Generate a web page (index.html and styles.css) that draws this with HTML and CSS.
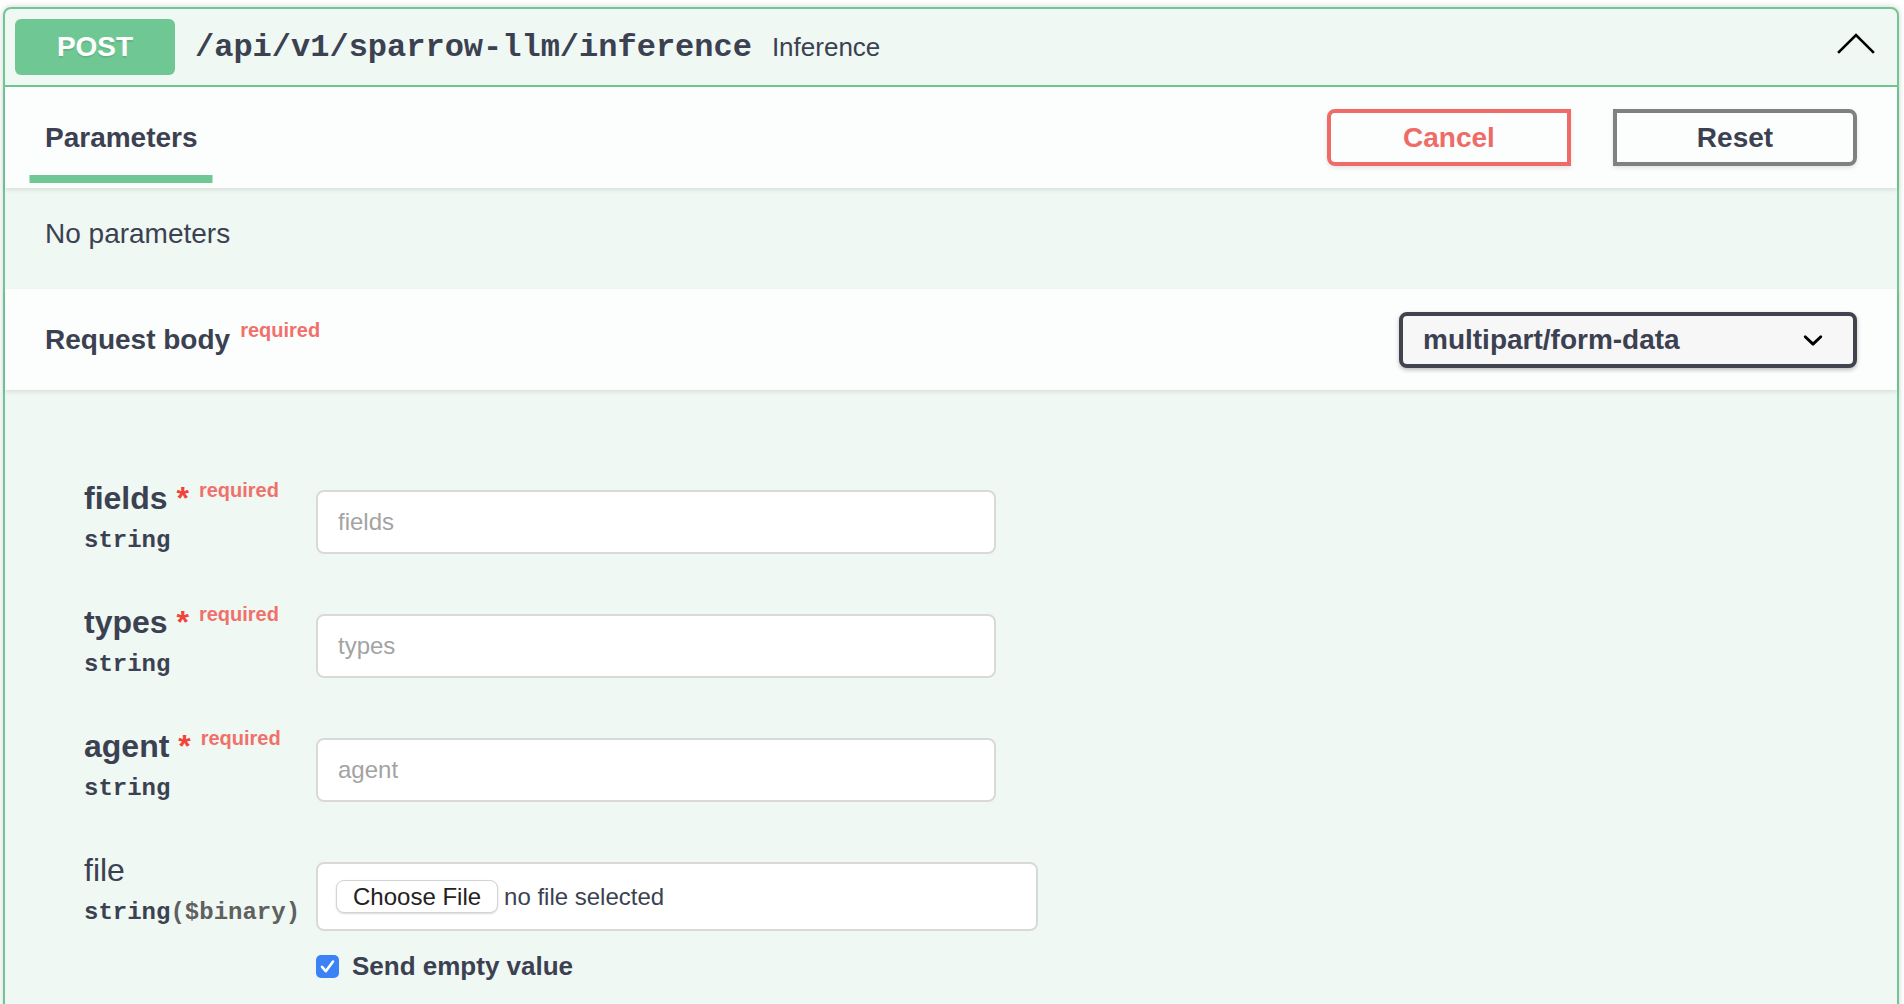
FILE: index.html
```html
<!DOCTYPE html>
<html lang="en">
<head>
<meta charset="utf-8">
<title>POST /api/v1/sparrow-llm/inference</title>
<link rel="stylesheet" href="styles.css">
</head>
<body>
<div class="page">
  <div class="opblock">
    <div class="summary">
      <span class="method">POST</span>
      <span class="path">/api/v1/sparrow-llm/inference</span>
      <span class="desc">Inference</span>
      <svg class="toggle" viewBox="0 0 40 40" aria-hidden="true"><polyline points="3,25 20,8 37,25" fill="none" stroke="#000" stroke-width="2.6" stroke-linecap="square"/></svg>
    </div>

    <div class="section-header">
      <div class="tabs">
        <h4 class="tab active"><span>Parameters</span></h4>
      </div>
      <div class="btn-group">
        <button class="btn cancel">Cancel</button>
        <button class="btn reset">Reset</button>
      </div>
    </div>

    <div class="desc-wrapper">
      <p>No parameters</p>
    </div>

    <div class="section-header">
      <h4 class="rb-title">Request body<span class="req">required</span></h4>
      <div class="select">
        <span>multipart/form-data</span>
        <svg class="select-arrow" viewBox="0 0 20 20" aria-hidden="true"><path d="M13.418 7.859a.695.695 0 01.978 0 .68.68 0 010 .969l-3.908 3.83a.697.697 0 01-.979 0l-3.908-3.83a.68.68 0 010-.969.695.695 0 01.978 0L10 11z" fill="#000"/></svg>
      </div>
    </div>

    <div class="body">
      <div class="params">
        <div class="cell-name">
          <div class="pname required">fields<span class="star">&nbsp;*</span><span class="req">required</span></div>
          <div class="ptype">string</div>
        </div>
        <div class="cell-input">
          <input class="text-input" type="text" placeholder="fields">
        </div>

        <div class="cell-name">
          <div class="pname required">types<span class="star">&nbsp;*</span><span class="req">required</span></div>
          <div class="ptype">string</div>
        </div>
        <div class="cell-input">
          <input class="text-input" type="text" placeholder="types">
        </div>

        <div class="cell-name">
          <div class="pname required">agent<span class="star">&nbsp;*</span><span class="req">required</span></div>
          <div class="ptype">string</div>
        </div>
        <div class="cell-input">
          <input class="text-input" type="text" placeholder="agent">
        </div>

        <div class="cell-name">
          <div class="pname">file</div>
          <div class="ptype">string<span class="fmt">($binary)</span></div>
        </div>
        <div class="cell-input">
          <div class="file-input">
            <span class="file-btn">Choose File</span>
            <span class="file-text">no file selected</span>
          </div>
          <label class="empty-toggle">
            <svg class="checkbox" viewBox="0 0 23 23" aria-hidden="true"><rect x="0" y="0" width="23" height="23" rx="5" fill="#3a82f6"/><path d="M6 11.8 L9.8 16.2 L17 6.5" fill="none" stroke="#fff" stroke-width="2.6" stroke-linecap="round" stroke-linejoin="round"/></svg>
            Send empty value
          </label>
        </div>
      </div>
    </div>
  </div>
</div>
</body>
</html>
```

FILE: styles.css
```css
* { box-sizing: border-box; }

html, body {
  margin: 0;
  padding: 0;
  background: #ffffff;
}

body {
  font-family: "Liberation Sans", Arial, Helvetica, sans-serif;
  color: #3b4151;
}

.page {
  padding: 7px 5px 0 3px;
}

.opblock {
  border: 2px solid #6fc894;
  border-radius: 8px;
  background: #eff8f3;
  box-shadow: 0 0 6px rgba(0, 0, 0, 0.19);
}

/* summary bar */
.summary {
  display: flex;
  align-items: center;
  padding: 10px;
  border-bottom: 2px solid #6fc894;
}

.method {
  min-width: 160px;
  height: 56px;
  display: flex;
  align-items: center;
  justify-content: center;
  background: #6fc894;
  color: #ffffff;
  font-size: 28px;
  font-weight: 700;
  border-radius: 6px;
  text-shadow: 0 2px 0 rgba(0, 0, 0, 0.1);
}

.path {
  font-family: "Liberation Mono", "Courier New", monospace;
  font-size: 32px;
  font-weight: 700;
  padding: 0 20px;
  color: #3b4151;
}

.desc {
  flex: 1;
  font-size: 26px;
  color: #3b4151;
}

.toggle {
  width: 40px;
  height: 40px;
  margin-right: 11px;
  flex: none;
}

/* section headers */
.section-header {
  display: flex;
  align-items: center;
  min-height: 101px;
  padding: 16px 40px;
  background: #fcfefd;
  box-shadow: 0 2px 4px rgba(0, 0, 0, 0.1);
  position: relative;
  z-index: 1;
}

.tabs {
  flex: 1;
  display: flex;
}

.tab {
  margin: 0;
  padding: 0 80px 0 0;
  font-size: 28px;
  font-weight: 700;
  line-height: 32px;
}

.tab span {
  position: relative;
}

.tab span::after {
  content: "";
  position: absolute;
  left: 50%;
  bottom: -30px;
  transform: translateX(-50%);
  width: 120%;
  height: 8px;
  background: #6fc894;
}

.btn-group {
  display: flex;
  gap: 42px;
}

.btn {
  width: 244px;
  height: 57px;
  padding: 0;
  font-family: inherit;
  font-size: 28px;
  font-weight: 700;
  background: transparent;
  border: 4px solid #808080;
  color: #3b4151;
  box-shadow: 0 2px 4px rgba(0, 0, 0, 0.1);
}

.btn.cancel {
  border-color: #ef6b67;
  color: #ef6b67;
  border-radius: 8px 0 0 8px;
}

.btn.reset {
  border-radius: 0 8px 8px 0;
}

/* no parameters */
.desc-wrapper {
  min-height: 101px;
  padding: 30px 40px;
}

.desc-wrapper p {
  margin: 0;
  font-size: 28px;
  line-height: 32px;
}

/* request body */
.rb-title {
  flex: 1;
  margin: 0;
  font-size: 28px;
  font-weight: 700;
}

.req {
  font-size: 20px;
  font-weight: 700;
  color: #f0716b;
  padding: 0 10px;
  vertical-align: 12px;
  line-height: 0;
}

.select {
  width: 458px;
  height: 56px;
  display: flex;
  align-items: center;
  justify-content: space-between;
  padding: 0 20px;
  border: 4px solid #41444e;
  border-radius: 8px;
  background: #f7f7f7;
  box-shadow: 0 2px 4px rgba(0, 0, 0, 0.25);
  font-size: 28px;
  font-weight: 700;
}

.select-arrow {
  width: 40px;
  height: 40px;
}

/* form body */
.body {
  padding: 70px 0 120px 79px;
}

.params {
  display: grid;
  grid-template-columns: 232px auto;
  justify-content: start;
}

.cell-name,
.cell-input {
  padding: 20px 0;
}

.pname {
  font-size: 32px;
  line-height: 37px;
  white-space: nowrap;
}

.pname.required {
  font-weight: 700;
}

.star {
  color: #f0443a;
}

.ptype {
  padding: 10px 0;
  font-family: "Liberation Mono", "Courier New", monospace;
  font-size: 24px;
  line-height: 27px;
  font-weight: 700;
  white-space: nowrap;
}

.fmt {
  color: #606060;
}

.text-input {
  display: block;
  width: 680px;
  height: 64px;
  margin: 10px 0;
  padding: 0 20px;
  border: 2px solid #d9d9d9;
  border-radius: 8px;
  background: #ffffff;
  font-family: inherit;
  font-size: 24px;
  color: #3b4151;
  outline: none;
}

.text-input::placeholder {
  color: #a3a3a3;
}

.file-input {
  width: 722px;
  height: 69px;
  margin: 10px 0;
  padding: 0 18px;
  border: 2px solid #d9d9d9;
  border-radius: 8px;
  background: #ffffff;
  display: flex;
  align-items: center;
  font-size: 24px;
}

.file-btn {
  height: 33px;
  padding: 0 16px;
  border: 1px solid #d3d3d3;
  border-radius: 8px;
  background: #ffffff;
  box-shadow: 0 1px 2px rgba(0, 0, 0, 0.15);
  display: flex;
  align-items: center;
  color: #222222;
  margin-right: 6px;
}

.file-text {
  color: #3b4151;
}

.empty-toggle {
  display: flex;
  align-items: center;
  padding-top: 10px;
  font-size: 26px;
  font-weight: 700;
  line-height: 30px;
}

.checkbox {
  width: 23px;
  height: 23px;
  margin-right: 13px;
  flex: none;
}
```
